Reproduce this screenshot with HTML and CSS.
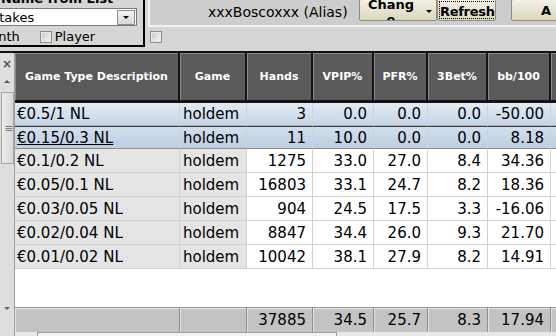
FILE: index.html
```html
<!doctype html>
<html>
  <head>
    <title>Game Type Stats</title>
    <meta name="viewport" content="width=device-width, initial-scale=1">
    <link rel="stylesheet" href="styles.css">
  </head>
  <body>
    <div class="top">
      <div class="group">
        <div class="group-inner">
          <div class="legend">Name from List</div>
          <div class="combo">
            <span class="combo-text">Stakes</span>
            <span class="combo-btn"><span class="tri"></span></span>
          </div>
          <div class="checks">
            <span class="month">Month</span>
            <span class="chk"></span>
            <span>Player</span>
          </div>
        </div>
      </div>
      <div class="panel">
        <div class="bar">
          <span class="alias">xxxBoscoxxx (Alias)</span>
          <span class="btn btn-change"><span class="btn-lines">Chang<br>e</span><span class="tri small"></span></span>
          <span class="btn btn-refresh"><span class="focus">Refresh</span></span>
          <span class="btn btn-a">A</span>
        </div>
        <div class="chk-row"><span class="chk"></span></div>
      </div>
    </div>
    <div class="main">
      <div class="side">
        <span class="close">×</span>
        <span class="tri up"></span>
        <span class="thumb"><span class="grip">≡</span></span>
        <span class="tri down"></span>
      </div>
      <div class="grid">
        <table class="stats">
          <colgroup>
            <col class="w1"><col class="w2"><col class="w3"><col class="w4">
            <col class="w5"><col class="w6"><col class="w7"><col class="w8">
          </colgroup>
          <thead>
            <tr>
              <th>Game Type Description</th>
              <th>Game</th>
              <th>Hands</th>
              <th>VPIP%</th>
              <th>PFR%</th>
              <th>3Bet%</th>
              <th>bb/100</th>
              <th></th>
            </tr>
          </thead>
          <tbody>
            <tr class="sel">
              <td>€0.5/1 NL</td><td>holdem</td><td>3</td><td>0.0</td><td>0.0</td><td>0.0</td><td>-50.00</td><td></td>
            </tr>
            <tr class="sel cur">
              <td><u>€0.15/0.3 NL</u></td><td>holdem</td><td>11</td><td>10.0</td><td>0.0</td><td>0.0</td><td>8.18</td><td></td>
            </tr>
            <tr>
              <td>€0.1/0.2 NL</td><td>holdem</td><td>1275</td><td>33.0</td><td>27.0</td><td>8.4</td><td>34.36</td><td></td>
            </tr>
            <tr>
              <td>€0.05/0.1 NL</td><td>holdem</td><td>16803</td><td>33.1</td><td>24.7</td><td>8.2</td><td>18.36</td><td></td>
            </tr>
            <tr>
              <td>€0.03/0.05 NL</td><td>holdem</td><td>904</td><td>24.5</td><td>17.5</td><td>3.3</td><td>-16.06</td><td></td>
            </tr>
            <tr>
              <td>€0.02/0.04 NL</td><td>holdem</td><td>8847</td><td>34.4</td><td>26.0</td><td>9.3</td><td>21.70</td><td></td>
            </tr>
            <tr>
              <td>€0.01/0.02 NL</td><td>holdem</td><td>10042</td><td>38.1</td><td>27.9</td><td>8.2</td><td>14.91</td><td></td>
            </tr>
          </tbody>
        </table>
        <div class="empty"></div>
        <table class="totals">
          <colgroup>
            <col class="w1"><col class="w2"><col class="w3"><col class="w4">
            <col class="w5"><col class="w6"><col class="w7"><col class="w8">
          </colgroup>
          <tr>
            <td></td><td></td><td>37885</td><td>34.5</td><td>25.7</td><td>8.3</td><td>17.94</td><td></td>
          </tr>
        </table>
        <div class="hscroll"><span class="hthumb"></span></div>
      </div>
    </div>
  </body>
</html>
```

FILE: styles.css
```css
html {
  box-sizing: border-box;
}
*, *::before, *::after {
  box-sizing: inherit;
}
body {
  margin: 0;
  width: 556px;
  height: 336px;
  overflow: hidden;
  background: #d6d6d6;
  font-family: "DejaVu Sans", Verdana, sans-serif;
  font-size: 13px;
  color: #000;
}

/* top controls */
.top {
  display: flex;
  height: 51px;
}
.group {
  flex: none;
  width: 145px;
  height: 47px;
  border-right: 2px solid #000;
  border-bottom: 2px solid #000;
  overflow: hidden;
}
.group-inner {
  margin: -9px 0 0 -12px;
}
.legend {
  font-weight: bold;
  height: 16px;
  line-height: 16px;
  padding-left: 13px;
  white-space: nowrap;
}
.combo {
  display: flex;
  align-items: center;
  justify-content: space-between;
  width: 149px;
  height: 18px;
  margin-top: 1px;
  background: #fff;
  border: 1px solid #7a7a7a;
  border-left: none;
}
.combo-text {
  padding-left: 3px;
}
.combo-btn {
  display: flex;
  align-items: center;
  justify-content: center;
  width: 18px;
  height: 15px;
  margin-right: 1px;
  background: linear-gradient(#f4f4f4, #d8d8d8);
  border: 1px solid #8c8c8c;
}
.tri {
  width: 0;
  height: 0;
  border-left: 3px solid transparent;
  border-right: 3px solid transparent;
  border-top: 3px solid #000;
}
.checks {
  display: flex;
  align-items: center;
  height: 15px;
  margin-top: 3px;
  white-space: nowrap;
}
.month {
  margin-left: -9px;
  margin-right: 20px;
}
.chk {
  display: inline-block;
  width: 12px;
  height: 12px;
  margin-right: 3px;
  border: 1px solid #8e8e8e;
  background: linear-gradient(135deg, #c8c8c8, #f8f8f8);
  box-shadow: inset 0 0 0 1px #eaeaea;
}

.panel {
  flex: 1;
  margin-left: 3px;
}
.bar {
  display: flex;
  align-items: flex-start;
  height: 27px;
  background: #cdcdcd;
  border-left: 2px solid #f2f2f2;
  border-bottom: 2px solid #f2f2f2;
  white-space: nowrap;
}
.alias {
  flex: none;
  width: 209px;
  padding: 4px 0 0 58px;
  font-size: 14px;
  line-height: 16px;
}
.btn {
  flex: none;
  display: flex;
  height: 22px;
  margin-top: -1px;
  background: linear-gradient(#f3f1e6, #dad6bf);
  border: 1px solid #8e8c7c;
  border-radius: 2px;
  font-weight: bold;
  overflow: hidden;
}
.btn-change {
  width: 78px;
  padding-left: 3px;
  align-items: center;
}
.btn-lines {
  width: 56px;
  margin-top: -3px;
  line-height: 15px;
  text-align: center;
  align-self: flex-start;
}
.tri.small {
  margin-left: 7px;
  margin-top: 2px;
}
.btn-refresh {
  width: 59px;
  padding: 1px;
}
.focus {
  flex: 1;
  padding-top: 2px;
  border: 1px dotted #000;
  line-height: 16px;
  text-align: center;
  letter-spacing: -0.3px;
}
.btn-a {
  width: 50px;
  margin-left: 15px;
  padding: 3px 0 0 29px;
  line-height: 16px;
}
.chk-row {
  padding: 4px 0 0 2px;
}

/* grid */
.main {
  display: flex;
  border-top: 2px solid #111;
}
.side {
  flex: none;
  display: flex;
  flex-direction: column;
  align-items: center;
  width: 15px;
  height: 290px;
  background: #dedede;
  border-right: 1px solid #9c9c9c;
}
.close {
  margin-top: 4px;
  font-size: 12px;
  font-weight: bold;
  color: #555;
  line-height: 14px;
}
.tri.up {
  margin-top: 9px;
  border-top: none;
  border-bottom: 3px solid #555;
}
.thumb {
  display: flex;
  justify-content: flex-end;
  align-items: center;
  width: 13px;
  height: 72px;
  margin-top: 9px;
  background: linear-gradient(90deg, #ececec, #d8d8d8);
  border: 1px solid #a6a6a6;
}
.grip {
  font-size: 11px;
  line-height: 11px;
  color: #777;
  margin-right: -1px;
}
.tri.down {
  margin-top: 143px;
  border-top-color: #666;
}
.grid {
  flex: 1;
  overflow: hidden;
  background: #fff;
}
table {
  table-layout: fixed;
  width: 576px;
  border-spacing: 0;
}
.w1 { width: 165px; }
.w2 { width: 67px; }
.w3 { width: 66px; }
.w4 { width: 61px; }
.w5 { width: 54px; }
.w6 { width: 60px; }
.w7 { width: 63px; }
.w8 { width: 40px; }

.stats th {
  height: 50px;
  padding: 0;
  background: #5a5a5a;
  color: #fff;
  font-size: 11px;
  font-weight: bold;
  border-right: 2px solid #141414;
  border-bottom: 3px solid #141414;
  box-shadow: inset 1px 1px 0 #8a8a8a;
  white-space: nowrap;
}
.stats td {
  height: 24px;
  padding: 0 6px 0 2px;
  font-size: 15px;
  border-right: 1px solid #d2d2d2;
  border-bottom: 1px solid #d2d2d2;
  text-align: right;
  white-space: nowrap;
}
.stats td:nth-child(1),
.stats td:nth-child(2) {
  text-align: left;
  background: #e5e5e5;
}
.stats td:nth-child(2) {
  padding-left: 3px;
}
.stats tr.sel td {
  height: 23px;
  background: linear-gradient(#e4ebf4, #c6d5e6);
  border-bottom-color: #a9b4c0;
}
.stats tr.cur td {
  background: linear-gradient(#d3dfec, #bccee3);
  border-top: 1px solid #3a3a3a;
  border-bottom-color: #8c8c8c;
}
.empty {
  height: 38px;
}
.totals td {
  height: 25px;
  padding: 0 6px 0 0;
  font-size: 15px;
  background: #c3c3c3;
  border-top: 1px solid #9a9a9a;
  border-right: 1px solid #8e8e8e;
  box-shadow: inset 1px 1px 0 #e4e4e4;
  text-align: right;
}
.hscroll {
  height: 16px;
  background: #e8e8e8;
  padding-left: 22px;
}
.hthumb {
  display: block;
  width: 300px;
  height: 16px;
  border: 1px solid #9c9c9c;
  background: #f2f2f2;
}
```
